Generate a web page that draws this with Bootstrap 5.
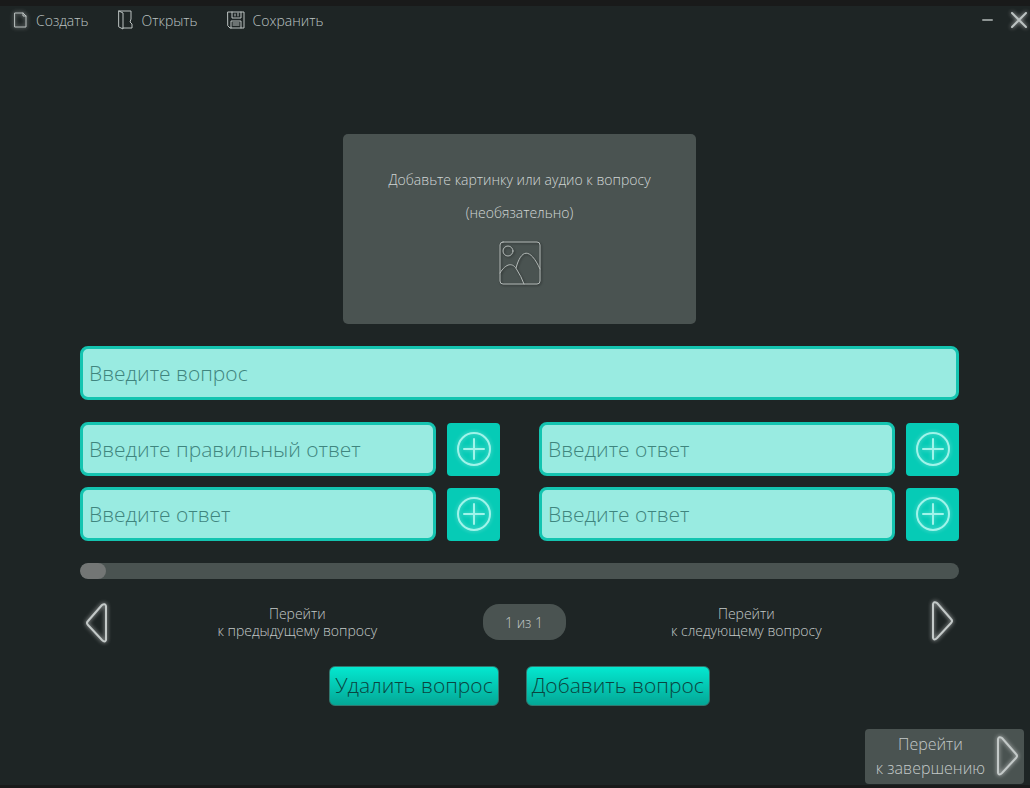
<!DOCTYPE html>
<html lang="ru">
<head>
<meta charset="utf-8">
<meta name="viewport" content="width=device-width, initial-scale=1">
<title>Редактор вопросов</title>
<link href="https://cdn.jsdelivr.net/npm/bootstrap@5.3.0/dist/css/bootstrap.min.css" rel="stylesheet">
<style>
  body { background: #1e2525; color: #d0d6d5; font-family: "Open Sans", "Noto Sans", sans-serif; font-weight: 300; font-size: 14px; line-height: 17px; border-top: 6px solid #191a1a; border-bottom: 3px solid #191a1a; }
  svg { display: block; fill: none; stroke: currentColor; stroke-linecap: round; stroke-linejoin: round; }
  .plain-btn { background: none; border: 0; padding: 0; color: inherit; font-weight: inherit; }
  .glow { filter: drop-shadow(0 0 2px rgba(255,255,255,.7)); }
  .menu-bar { padding: 0 2px 0 13px; height: 28px; color: #bcc3c2; }
  .menu-list { gap: 29px; }
  .editor { padding: 100px 71px 0 80px; }
  .media-drop { width: 353px; height: 190px; padding-top: 29px; background: #4a5351; border-radius: 5px; line-height: 33px; }
  .media-drop svg { margin-top: 12px; color: #b5bbb9; filter: drop-shadow(1px 1px 1px rgba(0,0,0,.5)); }
  .field { height: 54px; padding: 0 6px; border: 3px solid #14c4b0; border-radius: 8px; background: #99ebe1; color: #1d5a55; font-size: 21px; font-weight: 300; min-width: 0; }
  .field:focus { background: #99ebe1; border-color: #14c4b0; box-shadow: none; }
  .field::placeholder { color: #3f857e; opacity: 1; }
  .question { margin-top: 22px; }
  .answers { display: grid; grid-template-columns: 1fr 1fr; column-gap: 39px; row-gap: 11px; margin-top: 22px; }
  .answer { gap: 11px; }
  .add-btn { flex: 0 0 53px; height: 53px; padding: 0; border: 0; border-radius: 4px; background: #06cbb6; color: #a0f4ea; }
  .add-btn svg { filter: drop-shadow(0 0 2px rgba(255,255,255,.4)); }
  .track { height: 16px; margin-top: 22px; border-radius: 8px; background: #4a5351; }
  .track .progress-bar { border-radius: 8px; background: #737675; }
  .pager { margin-top: 18px; height: 50px; color: #c3c9c8; }
  .counter { width: 83px; height: 36px; border-radius: 16px; background: #4a5351; }
  .actions { gap: 27px; margin-top: 19px; }
  .act-btn { height: 40px; padding: 0 5px 2px; border: 1px solid #31776e; border-radius: 6px; background: linear-gradient(#04e8d0, #04a796); color: #0a4540; font-size: 21px; font-weight: 300; line-height: 24px; }
  .finish-row { padding: 23px 6px 1px; }
  .finish-btn { height: 55px; padding: 0 5px 2px 11px; border: 0; border-radius: 4px; background: #4a5351; color: #c3c9c8; font-size: 16px; font-weight: 300; line-height: 24px; gap: 10px; }
</style>
</head>
<body>
<header class="menu-bar d-flex justify-content-between align-items-center">
  <nav class="menu-list d-flex align-items-center">
    <button class="plain-btn d-flex align-items-center gap-2" type="button">
      <svg class="glow" width="15" height="18" viewBox="0 0 15 18"><path d="M2 2h8l3 3v11H2zM10 2v3h3"/></svg>Создать</button>
    <button class="plain-btn d-flex align-items-center gap-2" type="button">
      <svg width="16" height="20" viewBox="0 0 16 20"><path d="M1 1l4 2v16l-4-2zM1 1h12v8l-1 3 2 2v4H5"/></svg>Открыть</button>
    <button class="plain-btn d-flex align-items-center gap-2" type="button">
      <svg width="18" height="18" viewBox="0 0 18 18"><path d="M1 1h16v16H3l-2-2zM5 1v6h9V1M4 17v-7h10v7M8 3v2M11 2v3M6 12h6M6 14h6"/></svg>Сохранить</button>
  </nav>
  <div class="d-flex align-items-center gap-3">
    <button class="plain-btn" type="button" aria-label="Свернуть"><svg width="12" height="18" viewBox="0 0 12 18" stroke-width="2" stroke-opacity=".7"><path d="M1 9h9"/></svg></button>
    <button class="plain-btn glow" type="button" aria-label="Закрыть"><svg width="18" height="18" viewBox="0 0 18 18" stroke-width="2"><path d="M2 2l14 14M16 2L2 16"/></svg></button>
  </div>
</header>

<main class="editor">
  <button class="plain-btn media-drop d-flex flex-column align-items-center mx-auto" type="button">
    <span>Добавьте картинку или аудио к вопросу</span>
    <span>(необязательно)</span>
    <svg width="42" height="44" viewBox="0 0 42 44"><rect x="1" y="1" width="40" height="42" rx="3"/><circle cx="9" cy="10" r="5"/><path d="M1 32C7 22 14 21 18 29Q22 35 25 43M17 27C22 8 31 6 41 28"/></svg>
  </button>

  <input class="form-control field question" type="text" placeholder="Введите вопрос" aria-label="Вопрос">

  <div class="answers">
    <div class="answer d-flex align-items-center">
      <input class="form-control field" type="text" placeholder="Введите правильный ответ" aria-label="Правильный ответ">
      <button class="add-btn d-flex align-items-center justify-content-center" type="button" aria-label="Добавить файл"><svg width="36" height="36" viewBox="0 0 36 36" stroke-width="2"><circle cx="18" cy="18" r="16"/><path d="M18 8v20M8 18h20"/></svg></button>
    </div>
    <div class="answer d-flex align-items-center">
      <input class="form-control field" type="text" placeholder="Введите ответ" aria-label="Ответ 2">
      <button class="add-btn d-flex align-items-center justify-content-center" type="button" aria-label="Добавить файл"><svg width="36" height="36" viewBox="0 0 36 36" stroke-width="2"><circle cx="18" cy="18" r="16"/><path d="M18 8v20M8 18h20"/></svg></button>
    </div>
    <div class="answer d-flex align-items-center">
      <input class="form-control field" type="text" placeholder="Введите ответ" aria-label="Ответ 3">
      <button class="add-btn d-flex align-items-center justify-content-center" type="button" aria-label="Добавить файл"><svg width="36" height="36" viewBox="0 0 36 36" stroke-width="2"><circle cx="18" cy="18" r="16"/><path d="M18 8v20M8 18h20"/></svg></button>
    </div>
    <div class="answer d-flex align-items-center">
      <input class="form-control field" type="text" placeholder="Введите ответ" aria-label="Ответ 4">
      <button class="add-btn d-flex align-items-center justify-content-center" type="button" aria-label="Добавить файл"><svg width="36" height="36" viewBox="0 0 36 36" stroke-width="2"><circle cx="18" cy="18" r="16"/><path d="M18 8v20M8 18h20"/></svg></button>
    </div>
  </div>

  <div class="progress track" role="progressbar" aria-label="Вопросы" aria-valuenow="3" aria-valuemin="0" aria-valuemax="100"><div class="progress-bar" style="width: 3%"></div></div>

  <div class="pager d-flex justify-content-between align-items-center">
    <button class="plain-btn" type="button" aria-label="Предыдущий вопрос"><svg class="glow" width="32" height="44" viewBox="0 0 32 44" stroke-width="2"><path d="M26 6v34q-1 3-4 0L8 25q-2-2 0-4L22 5q3-2 4 1z"/></svg></button>
    <span class="text-center">Перейти<br>к предыдущему вопросу</span>
    <span class="counter d-flex align-items-center justify-content-center">1 из 1</span>
    <span class="text-center">Перейти<br>к следующему вопросу</span>
    <button class="plain-btn" type="button" aria-label="Следующий вопрос"><svg class="glow" width="32" height="44" viewBox="0 0 32 44" stroke-width="2"><path d="M6 4v34q1 3 4 0L24 23q2-2 0-4L10 3Q7 1 6 4z"/></svg></button>
  </div>

  <div class="actions d-flex justify-content-center">
    <button class="act-btn" type="button">Удалить вопрос</button>
    <button class="act-btn" type="button">Добавить вопрос</button>
  </div>
</main>

<footer class="finish-row d-flex justify-content-end">
  <button class="finish-btn d-flex align-items-center" type="button"><span>Перейти<br>к завершению</span>
    <svg class="glow" width="24" height="44" viewBox="0 0 24 44" stroke-width="2"><path d="M3 5v34q1 3 4 0L21 24q2-2 0-4L7 4Q4 2 3 5z"/></svg></button>
</footer>
<script src="https://cdn.jsdelivr.net/npm/bootstrap@5.3.0/dist/js/bootstrap.bundle.min.js"></script>
</body>
</html>
